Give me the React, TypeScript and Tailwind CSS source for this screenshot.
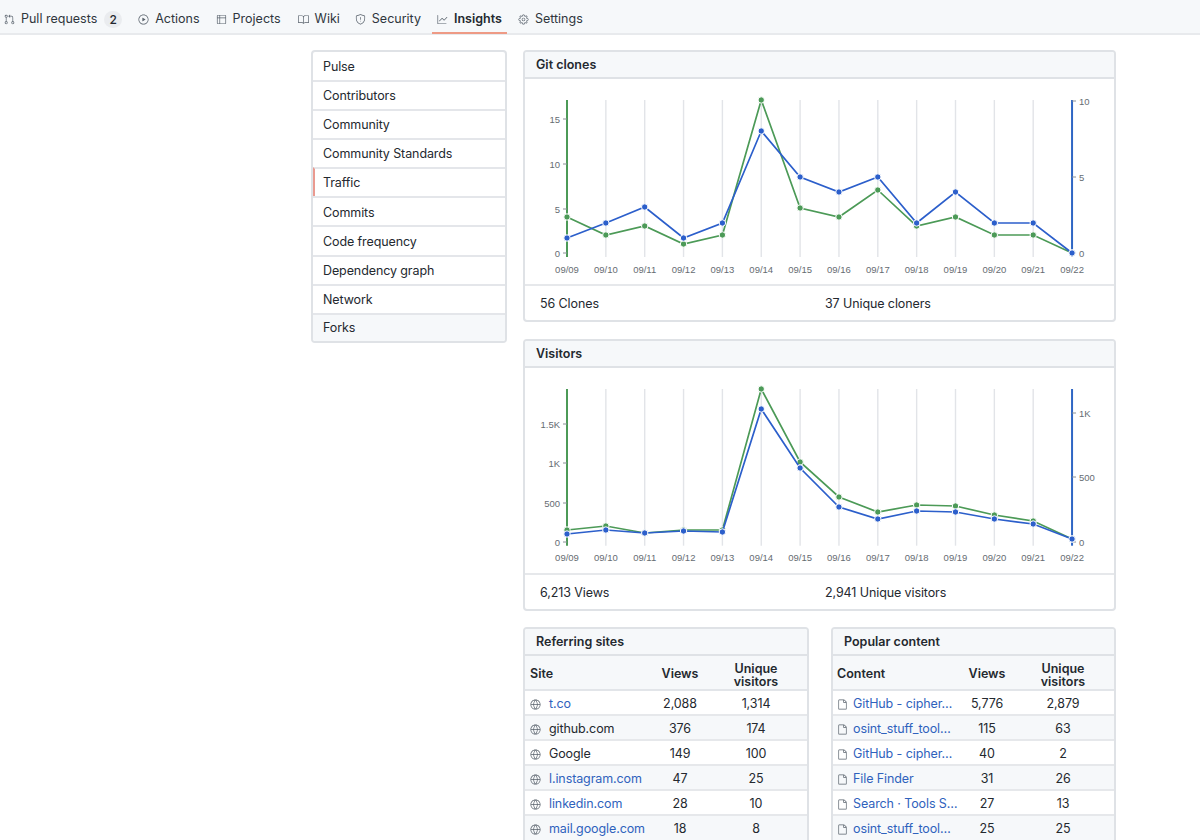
import type { ReactNode } from 'react'
import { GoBook, GoFile, GoGear, GoGitPullRequest, GoGlobe, GoGraph, GoPlay, GoShield, GoTable } from 'react-icons/go'

const dates = ['09/09', '09/10', '09/11', '09/12', '09/13', '09/14', '09/15', '09/16', '09/17', '09/18', '09/19', '09/20', '09/21', '09/22']

const sideLinks = ['Pulse', 'Contributors', 'Community', 'Community Standards', 'Traffic', 'Commits', 'Code frequency', 'Dependency graph', 'Network', 'Forks']

const referrers = [
  { name: 't.co', views: '2,088', unique: '1,314', link: true },
  { name: 'github.com', views: '376', unique: '174', link: false },
  { name: 'Google', views: '149', unique: '100', link: false },
  { name: 'l.instagram.com', views: '47', unique: '25', link: true },
  { name: 'linkedin.com', views: '28', unique: '10', link: true },
  { name: 'mail.google.com', views: '18', unique: '8', link: true },
]

const popular = [
  { name: 'GitHub - cipher…', views: '5,776', unique: '2,879' },
  { name: 'osint_stuff_tool…', views: '115', unique: '63' },
  { name: 'GitHub - cipher…', views: '40', unique: '2' },
  { name: 'File Finder', views: '31', unique: '26' },
  { name: 'Search · Tools S…', views: '27', unique: '13' },
  { name: 'osint_stuff_tool…', views: '25', unique: '25' },
]

type ChartProps = {
  top: number
  bottom: number
  green: number[]
  blue: number[]
  leftTicks: [string, number][]
  rightTicks: [string, number][]
}

const xAt = (i: number) => 42 + i * 38.85

const Chart = ({ top, bottom, green, blue, leftTicks, rightTicks }: ChartProps) => {
  const toPoints = (ys: number[]) => ys.map((y, i) => `${xAt(i)},${y}`).join(' ')
  const rightX = xAt(13)

  return (
    <svg width="589" height="205" className="block" fontFamily="'Liberation Sans', Arial, sans-serif" fontSize="9.5" fill="#666c72">
      {dates.map((d, i) => (
        <g key={d}>
          {i > 0 && i < 13 && <line x1={xAt(i)} x2={xAt(i)} y1={top} y2={bottom} stroke="#e2e4e8" strokeWidth="1.4" />}
          <text x={xAt(i)} y={bottom + 15.5} textAnchor="middle">{d}</text>
        </g>
      ))}
      <line x1={xAt(0)} x2={xAt(0)} y1={top} y2={bottom} stroke="#4c9a57" strokeWidth="2" />
      <line x1={rightX} x2={rightX} y1={top} y2={bottom} stroke="#2f66c4" strokeWidth="2" />
      {leftTicks.map(([label, y]) => (
        <g key={label}>
          <line x1={xAt(0) - 4} x2={xAt(0)} y1={y} y2={y} stroke="#8a9096" />
          <text x={xAt(0) - 7} y={y + 3.5} textAnchor="end">{label}</text>
        </g>
      ))}
      {rightTicks.map(([label, y]) => (
        <g key={label}>
          <line x1={rightX} x2={rightX + 4} y1={y} y2={y} stroke="#8a9096" />
          <text x={rightX + 7} y={y + 3.5}>{label}</text>
        </g>
      ))}
      <polyline points={toPoints(green)} fill="none" stroke="#4c9a57" strokeWidth="1.7" />
      {green.map((y, i) => <circle key={i} cx={xAt(i)} cy={y} r="3.2" fill="#4c9a57" stroke="#fff" strokeWidth="1" />)}
      <polyline points={toPoints(blue)} fill="none" stroke="#2c5fcb" strokeWidth="1.7" />
      {blue.map((y, i) => <circle key={i} cx={xAt(i)} cy={y} r="3.2" fill="#2c5fcb" stroke="#fff" strokeWidth="1" />)}
    </svg>
  )
}

const Card = ({ title, children }: { title: string; children: ReactNode }) => (
  <div className="overflow-hidden rounded-[4px] border-2 border-[#dfe2e6]">
    <div className="flex h-[27px] items-center border-b-2 border-[#dfe2e6] bg-[#f6f8fa] pl-[11px] pt-[2px] text-[12.5px] font-semibold text-[#24292f]">
      {title}
    </div>
    {children}
  </div>
)

const StatFooter = ({ left, right }: { left: string; right: string }) => (
  <div className="grid h-[36px] grid-cols-[285px_1fr] items-center border-t-2 border-[#e6e8eb] pl-[15px] pt-[2px] text-[12.5px] tracking-[-0.1px] text-[#24292f]">
    <span>{left}</span>
    <span>{right}</span>
  </div>
)

const TableHead = ({ first, pad }: { first: string; pad: string }) => (
  <div className={`grid h-[35px] grid-cols-[125px_50px_1fr] items-center border-b-2 border-[#e2e5e9] bg-[#f6f8fa] pt-[4px] text-[12.5px] font-semibold text-[#24292f] ${pad}`}>
    <span>{first}</span>
    <span className="text-center">Views</span>
    <span className="text-center leading-[13px]">Unique<br />visitors</span>
  </div>
)

const NavItem = ({ icon, label, className, active }: { icon: ReactNode; label: string; className: string; active?: boolean }) => (
  <a className={`relative flex items-center pt-[6px] ${className} ${active ? 'font-semibold text-[#24292f]' : 'text-[#2f363d]'}`}>
    <span className="flex w-[17px] shrink-0 text-[#59626c]">{icon}</span>
    {label}
    {active && <span className="absolute -left-[5px] -right-[5px] bottom-[-1px] h-[2px] bg-[#ee9a85]" />}
  </a>
)

export default function App() {
  return (
    <div className="h-[840px] overflow-hidden bg-white [font-family:Inter,sans-serif]">
      <nav className="flex h-[35px] items-stretch border-b-2 border-[#e8eaed] bg-[#f6f8fa] pl-1 text-[12.5px]">
        <NavItem icon={<GoGitPullRequest size={11} />} label="Pull requests" className="" />
        <span className="ml-[7px] mr-4 mt-[11px] flex h-[17px] w-[18px] items-center justify-center rounded-full bg-[#eaecef] text-[12px] font-medium text-[#24292f]">2</span>
        <NavItem icon={<GoPlay size={11} />} label="Actions" className="mr-4" />
        <NavItem icon={<GoTable size={11} />} label="Projects" className="mr-[17px]" />
        <NavItem icon={<GoBook size={11} />} label="Wiki" className="mr-[15px]" />
        <NavItem icon={<GoShield size={11} />} label="Security" className="mr-4" />
        <NavItem icon={<GoGraph size={11} />} label="Insights" className="mr-4" active />
        <NavItem icon={<GoGear size={11} />} label="Settings" className="" />
      </nav>

      <div className="flex items-start gap-4 pl-[311px] pt-[15px] text-[#24292f]">
        <ul className="w-[196px] shrink-0 overflow-hidden rounded-[4px] border-2 border-[#dfe2e6] text-[12.5px] tracking-[-0.1px]">
          {sideLinks.map((item, i) => (
            <li
              key={item}
              className={`flex items-center pt-[2px] ${i === 0 ? 'h-[28px]' : i === 9 ? 'h-[28.2px]' : 'h-[29.1px]'} ${i > 0 ? 'border-t-2 border-[#e4e6ea]' : ''} ${item === 'Traffic' ? 'border-l-2 border-l-[#ea9a90] pl-[8px]' : 'pl-[10px]'} ${item === 'Forks' ? 'bg-[#f6f8fa]' : ''}`}
            >
              {item}
            </li>
          ))}
        </ul>

        <main className="flex w-[593px] shrink-0 flex-col gap-[17px]">
          <Card title="Git clones">
            <Chart
              top={21}
              bottom={178}
              green={[138, 156, 147, 165, 156, 21, 129, 138, 111, 147, 138, 156, 156, 174]}
              blue={[159, 144, 128, 159, 144, 52, 98, 113, 98, 144, 113, 144, 144, 174]}
              leftTicks={[['15', 40], ['10', 85], ['5', 130], ['0', 174]]}
              rightTicks={[['10', 22], ['5', 98], ['0', 174]]}
            />
            <StatFooter left="56 Clones" right="37 Unique cloners" />
          </Card>

          <Card title="Visitors">
            <Chart
              top={21}
              bottom={177.7}
              green={[162, 158, 165, 162, 162, 21, 94, 129, 144, 137, 138, 147, 153, 171]}
              blue={[166, 162, 165, 163, 164, 41, 100, 139, 151, 143, 144, 151, 156, 171]}
              leftTicks={[['1.5K', 56], ['1K', 95], ['500', 135], ['0', 174]]}
              rightTicks={[['1K', 45], ['500', 109], ['0', 174]]}
            />
            <StatFooter left="6,213 Views" right="2,941 Unique visitors" />
          </Card>

          <div className="-mt-px grid grid-cols-[286px_285px] gap-[22px]">
            <Card title="Referring sites">
              <TableHead first="Site" pad="pl-[5px]" />
              {referrers.map((r, i) => (
                <div key={r.name} className={`grid h-[25.1px] grid-cols-[125px_50px_1fr] items-center border-b-2 border-[#e6e8eb] pl-[5px] pt-[3px] text-[12.5px] tracking-[-0.1px] ${i % 2 ? 'bg-[#f6f8fa]' : ''}`}>
                  <span className="flex items-center gap-2">
                    <GoGlobe size={11} className="shrink-0 text-[#59626c]" />
                    <span className={r.link ? 'text-[#2f62bd]' : ''}>{r.name}</span>
                  </span>
                  <span className="text-center">{r.views}</span>
                  <span className="text-center">{r.unique}</span>
                </div>
              ))}
            </Card>

            <Card title="Popular content">
              <TableHead first="Content" pad="pl-1" />
              {popular.map((p, i) => (
                <div key={i} className={`grid h-[25.1px] grid-cols-[125px_50px_1fr] items-center border-b-2 border-[#e6e8eb] pl-1 pt-[3px] text-[12.5px] tracking-[-0.1px] ${i % 2 ? 'bg-[#f6f8fa]' : ''}`}>
                  <span className="flex items-center gap-[5px]">
                    <GoFile size={11} className="shrink-0 text-[#59626c]" />
                    <span className="whitespace-nowrap text-[#2f62bd]">{p.name}</span>
                  </span>
                  <span className="text-center">{p.views}</span>
                  <span className="text-center">{p.unique}</span>
                </div>
              ))}
            </Card>
          </div>
        </main>
      </div>
    </div>
  )
}
